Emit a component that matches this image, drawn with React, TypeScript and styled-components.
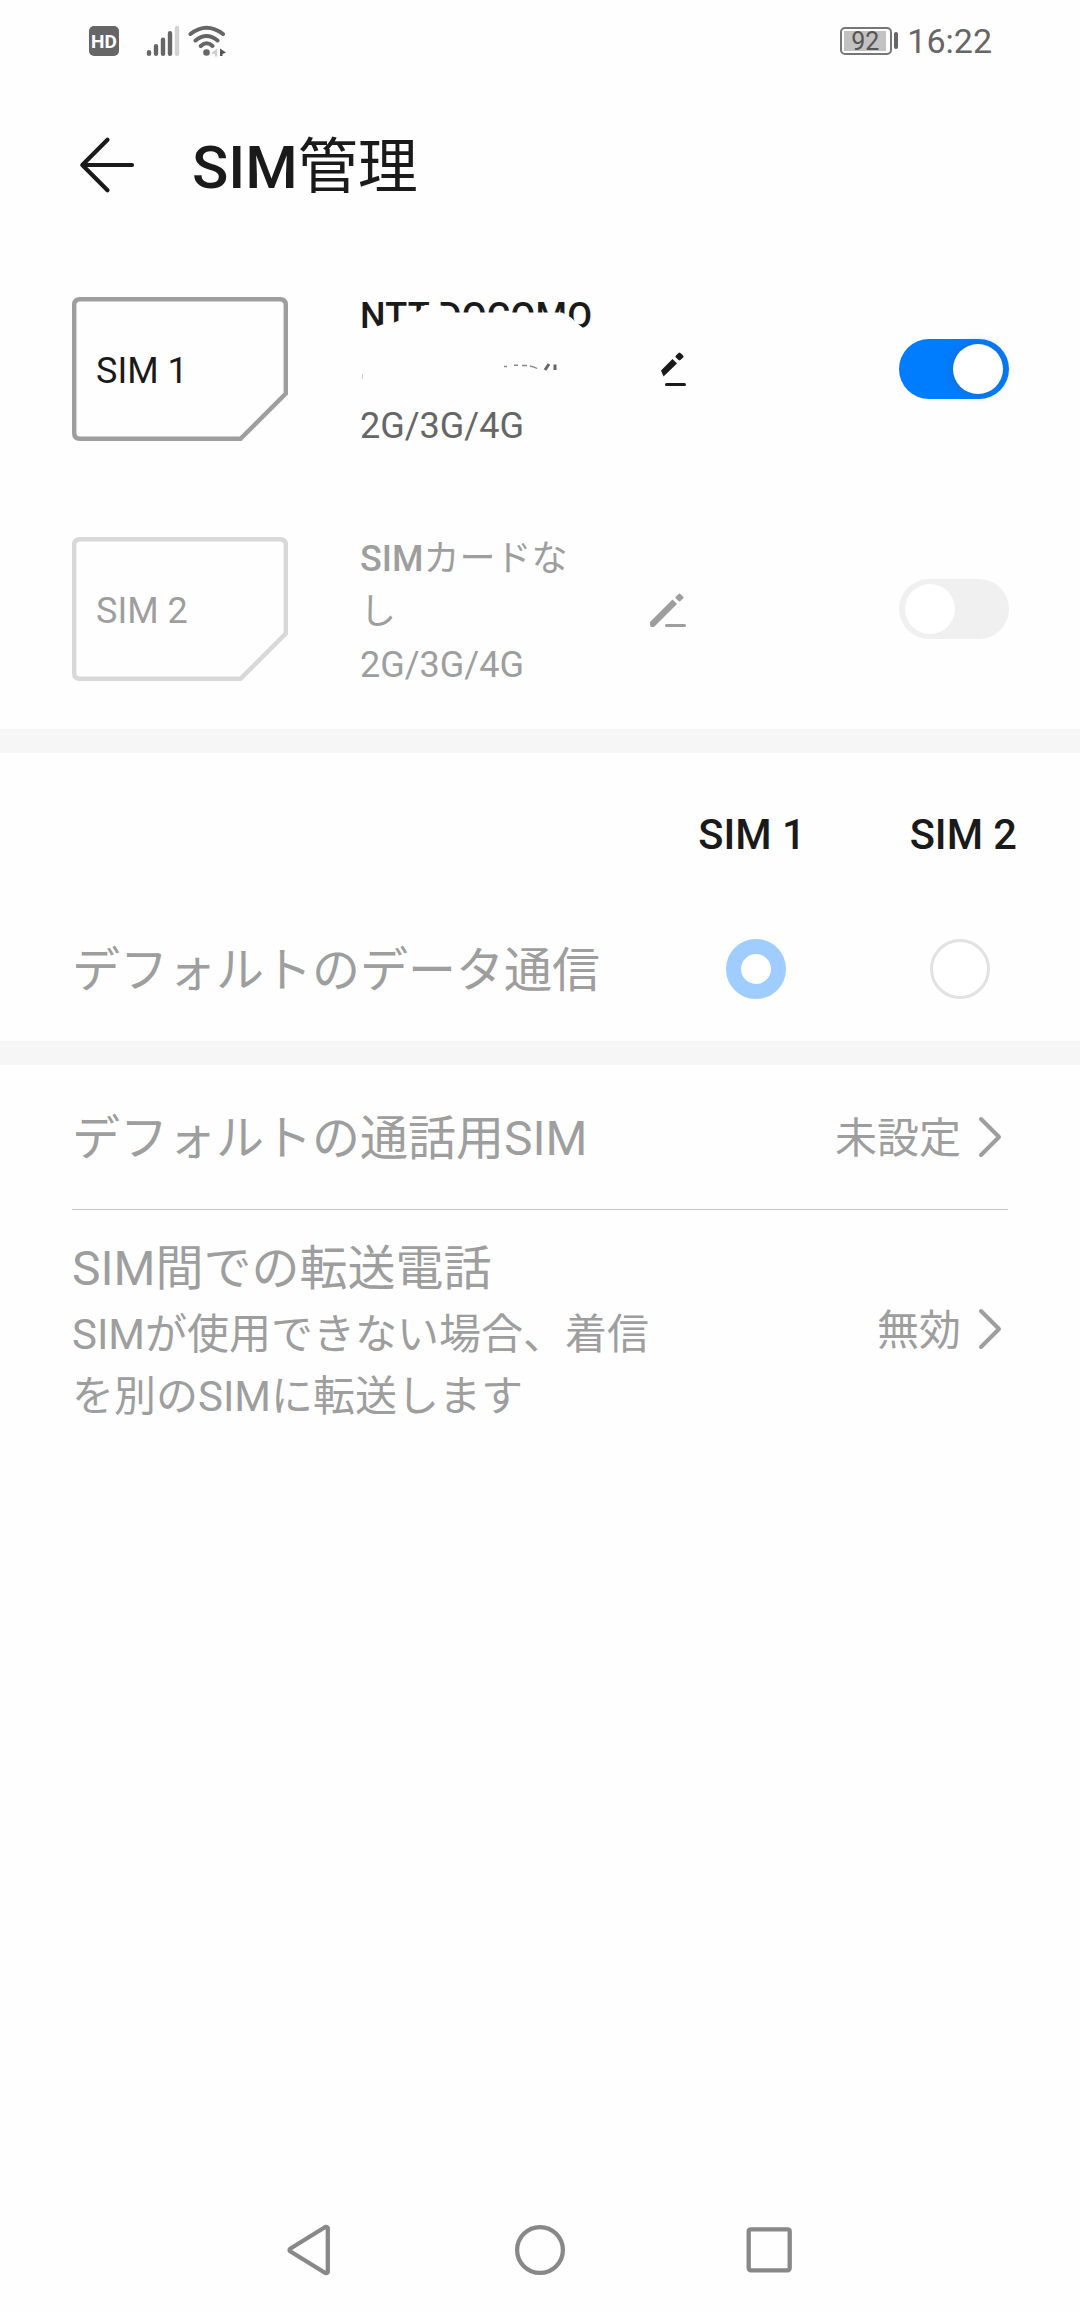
import React from "react";
import styled, { createGlobalStyle } from "styled-components";

const GlobalStyle = createGlobalStyle`
  * { box-sizing: border-box; }
  body {
    margin: 0;
    background: #fefefe;
    color: #1a1a1a;
    font-family: Roboto, "Noto Sans CJK JP", sans-serif;
  }
  svg { display: block; flex: none; }
`;

const Screen = styled.div`
  width: 1080px;
  height: 2312px;
  display: flex;
  flex-direction: column;
  background: #fefefe;
  overflow: hidden;
`;

const StatusBar = styled.header`
  height: 81px;
  flex: none;
  display: flex;
  align-items: center;
  padding: 0 88px 0 89px;
`;

const StatusGroup = styled.div<{ $push?: boolean }>`
  display: flex;
  align-items: center;
  gap: ${(p) => (p.$push ? "0" : "6px")};
  margin-left: ${(p) => (p.$push ? "auto" : "0")};
`;

const HdBadge = styled.span`
  width: 30px;
  height: 30px;
  border-radius: 5px;
  background: #666;
  color: #fff;
  font-size: 19px;
  font-weight: 700;
  line-height: 31px;
  text-align: center;
  margin-right: 21px;
`;

const Battery = styled.span`
  width: 52px;
  height: 28px;
  border: 2px solid #777;
  border-radius: 5px;
  padding: 2px 4px 2px 2px;
  display: flex;
`;

const BatteryLevel = styled.span`
  flex: 1;
  background: #c2c2c2;
  color: #555;
  font-size: 25px;
  line-height: 21px;
  text-align: center;
`;

const BatteryTip = styled.span`
  width: 4px;
  height: 17px;
  border-radius: 2px;
  background: #666;
  margin: 0 9px 0 2px;
`;

const Clock = styled.span`
  font-size: 34px;
  line-height: 40px;
  color: #666;
`;

const TitleBar = styled.div`
  height: 168px;
  flex: none;
  display: flex;
  align-items: center;
  padding-left: 78px;
  gap: 56px;
`;

const Title = styled.h1`
  margin: 5px 0 0;
  font-size: 60px;
  line-height: 80px;
  font-weight: 500;
`;

const Cjk = styled.span`
  font-weight: 400;
`;

const SimRow = styled.section`
  height: 240px;
  flex: none;
  display: flex;
  align-items: center;
  padding: 0 71px 0 72px;
`;

const SimCard = styled.div<{ $off?: boolean }>`
  width: 216px;
  height: 144px;
  flex: none;
  display: grid;
  align-items: center;
  margin-right: 72px;
  color: ${(p) => (p.$off ? "#9e9e9e" : "#1a1a1a")};
  & > * { grid-area: 1 / 1; }
`;

const CardLabel = styled.span`
  padding: 3px 0 0 24px;
  font-size: 36px;
  line-height: 40px;
`;

const SimInfo = styled.div<{ $off?: boolean; $line: number }>`
  width: 232px;
  flex: none;
  padding-top: ${(p) => (p.$off ? 7 : 5)}px;
  position: relative;
  font-size: 36px;
  line-height: ${(p) => p.$line}px;
  white-space: nowrap;
  color: ${(p) => (p.$off ? "#9e9e9e" : "#666")};
`;

const SimName = styled.div<{ $off?: boolean }>`
  font-weight: 500;
  letter-spacing: ${(p) => (p.$off ? "0" : "0.2px")};
  color: ${(p) => (p.$off ? "#9e9e9e" : "#1a1a1a")};
`;

const NumberLine = styled.div`
  height: 55px;
`;

const Scribble = styled.svg`
  position: absolute;
  left: 0;
  top: 0;
`;

const PencilSlot = styled.div`
  margin-left: 56px;
`;

const Toggle = styled.div<{ $on?: boolean }>`
  width: 110px;
  height: 60px;
  margin-left: auto;
  padding: 5px 6px;
  border-radius: 30px;
  display: flex;
  justify-content: ${(p) => (p.$on ? "flex-end" : "flex-start")};
  background: ${(p) => (p.$on ? "#007dff" : "#f0f0f0")};
`;

const Knob = styled.span<{ $on?: boolean }>`
  width: 50px;
  height: 50px;
  border-radius: 50%;
  background: #fff;
  box-shadow: ${(p) => (p.$on ? "0 0 8px 2px rgba(60, 90, 140, 0.35)" : "none")};
`;

const SectionGap = styled.div`
  height: 24px;
  flex: none;
  background: #f6f6f6;
`;

const ColumnHeads = styled.div`
  height: 164px;
  flex: none;
  display: flex;
  align-items: center;
  justify-content: flex-end;
  gap: 104px;
  padding: 0 63px 1px 0;
  font-size: 41.6px;
  font-weight: 500;
`;

const DataRow = styled.div`
  height: 124px;
  flex: none;
  display: flex;
  align-items: center;
  padding: 0 90px 20px 72px;
`;

const Radios = styled.div`
  display: flex;
  gap: 144px;
`;

const RowTitle = styled.div<{ $drop?: number }>`
  flex: 1;
  padding-top: ${(p) => p.$drop ?? 0}px;
  font-size: 48px;
  line-height: 70px;
  color: #9e9e9e;
  white-space: nowrap;
`;

const Radio = styled.span<{ $on?: boolean }>`
  width: 60px;
  height: 60px;
  flex: none;
  border-radius: 50%;
  border: ${(p) => (p.$on ? "15px solid #a0cdff" : "3px solid #e2e2e2")};
  background: #fff;
`;

const LinkRow = styled.div<{ $height: number }>`
  height: ${(p) => p.$height}px;
  flex: none;
  display: flex;
  align-items: center;
  padding: 0 78px 0 72px;
`;

const LinkText = styled.div`
  flex: 1;
  height: 100%;
  padding-top: 24px;
`;

const Summary = styled.div`
  width: 600px;
  font-size: 42px;
  line-height: 61.5px;
  color: #9e9e9e;
`;

const Value = styled.span`
  font-size: 42px;
  line-height: 60px;
  color: #9e9e9e;
  padding-top: 3px;
  margin-right: 17px;
`;

const Hairline = styled.div`
  height: 1px;
  flex: none;
  margin: 0 72px;
  background: #c8c8c8;
`;

const NavBar = styled.nav`
  height: 124px;
  flex: none;
  margin-top: auto;
  display: flex;
  align-items: center;
  padding: 0 286px;
  gap: 180px;
`;

const SimOutline = ({ color }: { color: string }) => (
  <svg width="216" height="144" viewBox="0 0 216 144" fill="none">
    <path
      d="M8 2.2H208Q213.8 2.2 213.8 8V96.5L168.5 141.8H8Q2.2 141.8 2.2 136V8Q2.2 2.2 8 2.2Z"
      stroke={color}
      strokeWidth="4.4"
    />
  </svg>
);

const Chevron = () => (
  <svg width="24" height="42" viewBox="0 0 24 42" fill="none">
    <path d="M3 3L21 21L3 39" stroke="#9e9e9e" strokeWidth="4" strokeLinecap="round" strokeLinejoin="round" />
  </svg>
);

export default function App() {
  return (
    <>
      <GlobalStyle />
      <Screen>
        <StatusBar>
          <StatusGroup>
            <HdBadge>HD</HdBadge>
            <svg width="34" height="32" viewBox="146 24 34 32" strokeWidth="4.4" strokeLinecap="round" stroke="#666">
              <path d="M149 51.2V52.8M156 45.2V52.8M163 38.7V52.8M170 32.2V52.8" />
              <path d="M177 27V52.8" stroke="#d2d2d2" />
            </svg>
            <svg width="40" height="32" viewBox="186 24 40 32" fill="none" stroke="#666" strokeWidth="4" strokeLinecap="round">
              <path d="M190.5 33Q206.5 20.5 223 33M195.5 39.5Q206.5 30.5 217.5 39.5M200.8 45Q206.5 39.5 212.5 45" />
              <circle cx="206.5" cy="51.5" r="3.3" fill="#666" stroke="none" />
              <path d="M217 47.5V55.5H215V53H212V51.5Z" fill="#cfcfcf" stroke="none" />
              <path d="M220 47.5L226 51.5L222.5 53V55H220Z" fill="#555" stroke="none" />
            </svg>
          </StatusGroup>
          <StatusGroup $push>
            <Battery>
              <BatteryLevel>92</BatteryLevel>
            </Battery>
            <BatteryTip />
            <Clock>16:22</Clock>
          </StatusGroup>
        </StatusBar>

        <TitleBar>
          <svg width="58" height="58" viewBox="0 0 58 58" fill="none" stroke="#1a1a1a" strokeWidth="4.2" strokeLinecap="round" strokeLinejoin="round">
            <path d="M29.5 3.8L4.3 29L29.5 54.2M4.3 29H54" />
          </svg>
          <Title>
            SIM<Cjk>管理</Cjk>
          </Title>
        </TitleBar>

        <SimRow>
          <SimCard>
            <SimOutline color="#9e9e9e" />
            <CardLabel>SIM 1</CardLabel>
          </SimCard>
          <SimInfo $line={55}>
            <SimName>NTT DOCOMO</SimName>
            <NumberLine />
            <div>2G/3G/4G</div>
            <Scribble width="240" height="100" viewBox="360 284 240 100">
              <path
                d="M373 328L382 324.5L393 323L399 320.5L409 317L415 312.5L419 311L425 305L441 305.5L448 306.5L454 312.5H562L571 317.5L578 324L582 327L586 334H373Z"
                fill="#fefefe"
              />
              <path d="M504 366.5h3M514 365.3h4M522 365.5h5M530 366Q535 367 537 368.5" stroke="#888" strokeWidth="1.4" fill="none" />
              <path d="M545 370L549 364M555 364.5V370" stroke="#666" strokeWidth="3" fill="none" />
              <path d="M362.5 374V379" stroke="#ccc" strokeWidth="1" />
            </Scribble>
          </SimInfo>
          <PencilSlot>
            <svg width="40" height="40" viewBox="648 349 40 40">
              <path d="M661 370.5L672.5 359L677 363.5L663.5 376.5Z" fill="#1a1a1a" />
              <rect x="676.3" y="353.3" width="6.4" height="6.4" rx="1.3" transform="rotate(45 679.5 356.5)" fill="#1a1a1a" />
              <path d="M666.5 384.5H684.5" stroke="#1a1a1a" strokeWidth="3" strokeLinecap="round" />
            </svg>
          </PencilSlot>
          <Toggle $on>
            <Knob $on />
          </Toggle>
        </SimRow>

        <SimRow>
          <SimCard $off>
            <SimOutline color="#d8d8d8" />
            <CardLabel>SIM 2</CardLabel>
          </SimCard>
          <SimInfo $off $line={53.3}>
            <SimName $off>
              SIM<Cjk>カードな</Cjk>
              <br />
              <Cjk>し</Cjk>
            </SimName>
            <div>2G/3G/4G</div>
          </SimInfo>
          <PencilSlot>
            <svg width="40" height="40" viewBox="648 589 40 40">
              <path d="M650 622L672.5 599.5L677 604L654.5 626.5Q653.5 627 652 627Q650 627 650 625Z" fill="#9e9e9e" />
              <rect x="676.3" y="594.3" width="6.4" height="6.4" rx="1.3" transform="rotate(45 679.5 597.5)" fill="#9e9e9e" />
              <path d="M666.5 625.5H684.5" stroke="#9e9e9e" strokeWidth="3" strokeLinecap="round" />
            </svg>
          </PencilSlot>
          <Toggle>
            <Knob />
          </Toggle>
        </SimRow>

        <SectionGap />
        <ColumnHeads>
          <span>SIM 1</span>
          <span>SIM 2</span>
        </ColumnHeads>
        <DataRow>
          <RowTitle $drop={4}>デフォルトのデータ通信</RowTitle>
          <Radios>
            <Radio $on />
            <Radio />
          </Radios>
        </DataRow>

        <SectionGap />
        <LinkRow $height={144}>
          <RowTitle $drop={4}>デフォルトの通話用SIM</RowTitle>
          <Value>未設定</Value>
          <Chevron />
        </LinkRow>
        <Hairline />
        <LinkRow $height={238}>
          <LinkText>
            <RowTitle>SIM間での転送電話</RowTitle>
            <Summary>SIMが使用できない場合、着信を別のSIMに転送します</Summary>
          </LinkText>
          <Value>無効</Value>
          <Chevron />
        </LinkRow>

        <NavBar>
          <svg width="48" height="52" viewBox="286 2224 48 52" fill="none" stroke="#888" strokeWidth="4.3" strokeLinejoin="round">
            <path d="M327.8 2228V2272Q326.5 2274 324.5 2272.5L290.5 2251.5Q288.5 2250 290.5 2248.5L324.5 2227.5Q326.5 2226 327.8 2228Z" />
          </svg>
          <svg width="52" height="52" viewBox="0 0 52 52" fill="none" stroke="#888" strokeWidth="4.3">
            <circle cx="26" cy="26" r="22.9" />
          </svg>
          <svg width="48" height="48" viewBox="0 0 48 48" fill="none" stroke="#888" strokeWidth="4.3">
            <rect x="2.7" y="3.3" width="41" height="41" rx="2" />
          </svg>
        </NavBar>
      </Screen>
    </>
  );
}
